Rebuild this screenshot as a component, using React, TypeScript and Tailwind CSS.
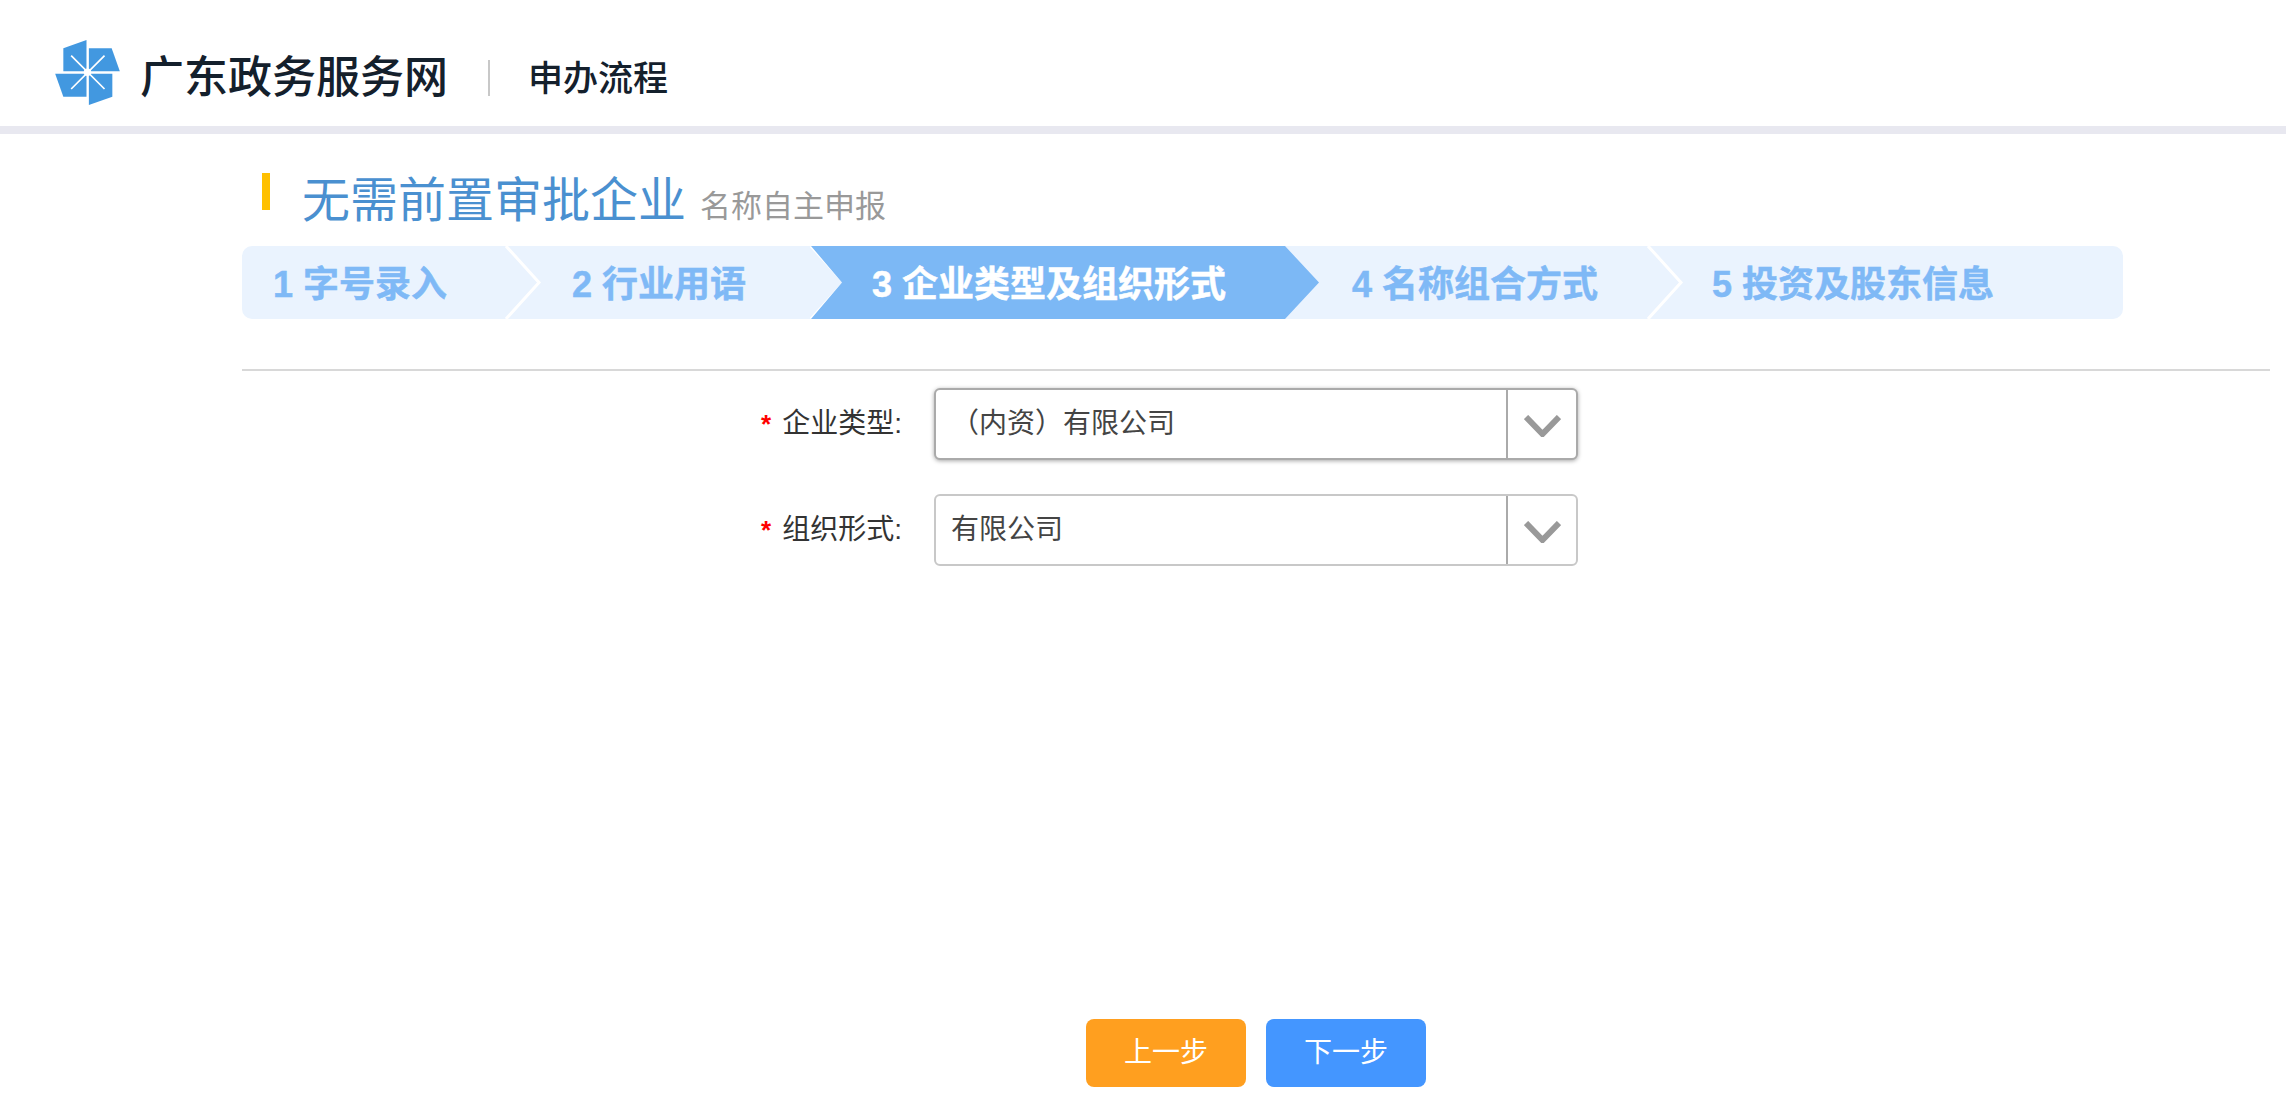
import React from 'react';

const font = { fontFamily: '"Liberation Sans", "Noto Sans CJK SC", sans-serif' };

const steps = [
  { label: '1 字号录入', width: 'w-[264px]', pad: 'pl-[31px]' },
  { label: '2 行业用语', width: 'w-[305px]', pad: 'pl-[66px]' },
  { label: '3 企业类型及组织形式', width: 'w-[476px]', pad: 'pl-[61px]', active: true },
  { label: '4 名称组合方式', width: 'w-[361px]', pad: 'pl-[65px]' },
  { label: '5 投资及股东信息', width: 'flex-1', pad: 'pl-[64px]', last: true },
];

const Logo = () => (
  <svg width="65" height="65" viewBox="48 36 190 191" className="shrink-0 -translate-y-[6px]">
    <g fill="#4298e0">
      <polygon points="72,60 140,36 140,128 72,128" />
      <polygon points="147,60 214,60 238,128 147,128" />
      <polygon points="48,135 140,135 140,203 72,203" />
      <polygon points="147,135 216,135 216,203 147,227" />
    </g>
    <path d="M95 82 L193 180 M193 82 L95 180" stroke="#fff" strokeWidth="5" />
    <circle cx="143" cy="131" r="11" fill="#fff" />
  </svg>
);

const Chevron = () => (
  <svg width="37" height="22" viewBox="0 0 37 22" fill="none">
    <path d="M2 2 L18.5 19 L35 2" stroke="#999" strokeWidth="6" />
  </svg>
);

const Select = ({ value, focused }: { value: string; focused?: boolean }) => (
  <div
    className={`flex h-[72px] w-[644px] items-stretch rounded-[6px] border-2 bg-white ${
      focused ? 'border-[#aaa] shadow-[0_1px_4px_rgba(0,0,0,0.35)]' : 'border-[#c8c8c8]'
    }`}
  >
    <div className="flex flex-1 items-center pl-[15px] text-[28px] text-[#444]">{value}</div>
    <div className="flex w-[70px] items-center justify-center border-l-2 border-[#aaa] pt-1">
      <Chevron />
    </div>
  </div>
);

const FormRow = ({ label, value, focused }: { label: string; value: string; focused?: boolean }) => (
  <div className="flex items-center">
    <div className="flex w-[934px] items-center justify-end pr-8 text-[28px] text-[#333]">
      <span className="mr-[11px] text-[26px] font-bold text-[#f00]">*</span>
      {label}:
    </div>
    <Select value={value} focused={focused} />
  </div>
);

export default function App() {
  return (
    <div className="min-h-screen bg-white" style={font}>
      {/* header */}
      <header className="box-content flex h-[96px] items-center border-b-[8px] border-[#e8e8f0] pl-[55px] pt-[30px]">
        <Logo />
        <span className="ml-5 text-[44px] font-medium leading-none text-[#14202c]">广东政务服务网</span>
        <span className="ml-10 h-[36px] w-[2px] bg-[#c8c8c8]" />
        <span className="ml-[38px] text-[35px] font-medium leading-none text-[#14202c]">申办流程</span>
      </header>

      <main className="pl-[242px] pr-4">
        {/* title */}
        <div className="flex h-[112px] items-start pl-5 pt-[39px]">
          <span className="h-[37px] w-[8px] bg-[#ffc000]" />
          <span className="ml-8 -mt-1 text-[48px] leading-[64px] text-[#4a90d0]">无需前置审批企业</span>
          <span className="ml-[14px] mt-[10px] text-[31px] leading-[48px] text-[#999]">名称自主申报</span>
        </div>

        {/* steps */}
        <div className="flex h-[73px] w-[1881px] rounded-[10px] bg-[#eaf3fe]">
          {steps.map((s) => (
            <div key={s.label} className={`relative flex items-center ${s.width} ${s.pad}`}>
              {s.active && (
                <div className="absolute inset-y-0 left-0 w-[508px] bg-[#7cb8f5] [clip-path:polygon(0_0,474px_0,100%_50%,474px_100%,0_100%,31px_50%)]" />
              )}
              <span
                className={`relative top-[2px] text-[36px] font-bold [-webkit-text-stroke:0.5px_currentColor] ${
                  s.active ? 'text-white' : 'text-[#7fb9f6]'
                }`}
              >
                {s.label}
              </span>
              {!s.last && !s.active && (
                <svg width="37" height="73" viewBox="0 0 37 73" fill="none" className="absolute left-full top-0 -ml-px">
                  <path d="M1 0 L34 36.5 L1 73" stroke="#fff" strokeWidth="3" />
                </svg>
              )}
            </div>
          ))}
        </div>

        <div className="mt-[50px] h-[2px] w-[2028px] bg-[#d8d8d8]" />
      </main>

      {/* form */}
      <div className="mt-[17px] flex flex-col gap-[34px]">
        <FormRow label="企业类型" value="（内资）有限公司" focused />
        <FormRow label="组织形式" value="有限公司" />
      </div>

      {/* actions */}
      <div className="mt-[453px] flex gap-5 pl-[1086px]">
        <button className="h-[68px] w-[160px] rounded-[8px] bg-[#ff9f1f] text-[28px] text-white">上一步</button>
        <button className="h-[68px] w-[160px] rounded-[8px] bg-[#4496ff] text-[28px] text-white">下一步</button>
      </div>
    </div>
  );
}
